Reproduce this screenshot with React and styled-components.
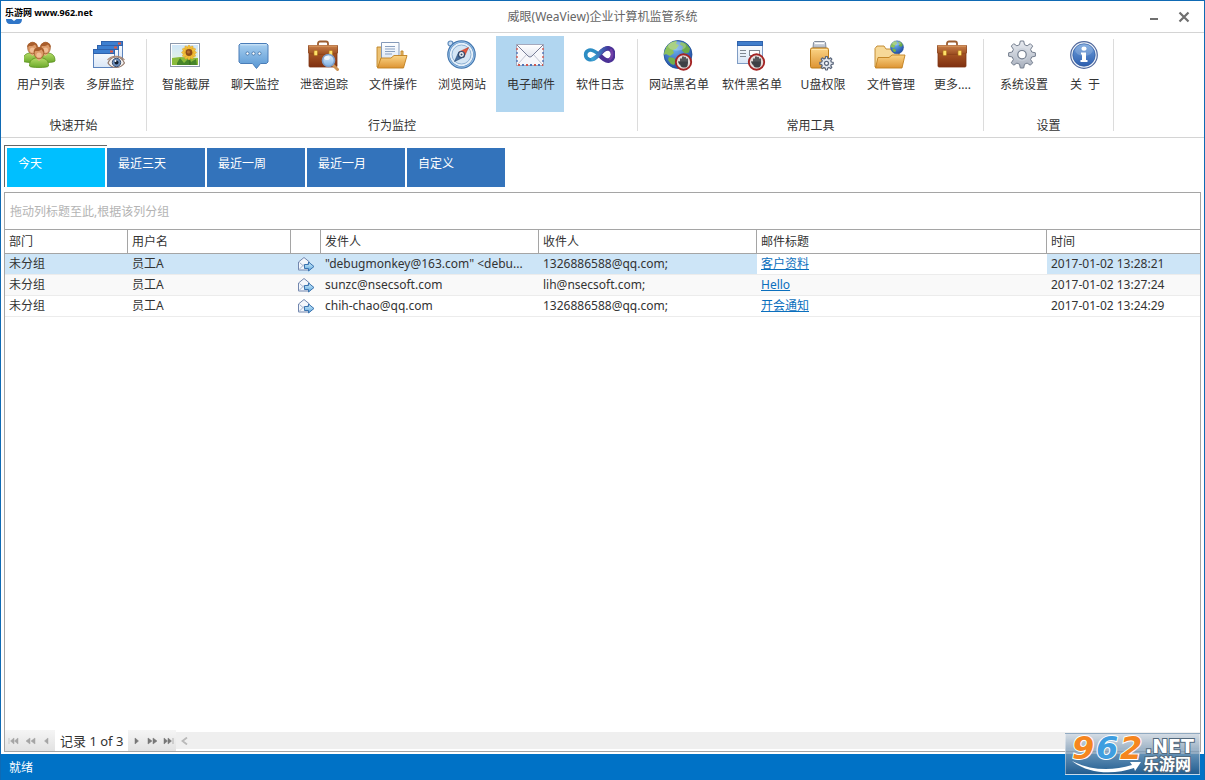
import React, { useState } from 'react';
import styled, { createGlobalStyle } from 'styled-components';

const toolGroups = [
  {
    title: '快速开始',
    tools: [
      { label: '用户列表', icon: 'users', width: 70 },
      { label: '多屏监控', icon: 'screens', width: 66 },
    ],
  },
  {
    title: '行为监控',
    tools: [
      { label: '智能截屏', icon: 'picture', width: 68 },
      { label: '聊天监控', icon: 'chat', width: 68 },
      { label: '泄密追踪', icon: 'trace', width: 68 },
      { label: '文件操作', icon: 'files', width: 68 },
      { label: '浏览网站', icon: 'compass', width: 68 },
      { label: '电子邮件', icon: 'mail', width: 68 },
      { label: '软件日志', icon: 'infinity', width: 68 },
    ],
  },
  {
    title: '常用工具',
    tools: [
      { label: '网站黑名单', icon: 'webBlock', width: 72 },
      { label: '软件黑名单', icon: 'appBlock', width: 72 },
      { label: 'U盘权限', icon: 'usb', width: 68 },
      { label: '文件管理', icon: 'fileManage', width: 66 },
      { label: '更多....', icon: 'briefcase', width: 55 },
    ],
  },
  {
    title: '设置',
    tools: [
      { label: '系统设置', icon: 'gear', width: 70 },
      { label: '关  于', icon: 'info', width: 50 },
    ],
  },
];

const tabs = ['今天', '最近三天', '最近一周', '最近一月', '自定义'];

const mails = [
  {
    dept: '未分组',
    user: '员工A',
    from: '"debugmonkey@163.com" <debu...',
    to: '1326886588@qq.com;',
    title: '客户资料',
    time: '2017-01-02 13:28:21',
  },
  {
    dept: '未分组',
    user: '员工A',
    from: 'sunzc@nsecsoft.com',
    to: 'lih@nsecsoft.com;',
    title: 'Hello',
    time: '2017-01-02 13:27:24',
  },
  {
    dept: '未分组',
    user: '员工A',
    from: 'chih-chao@qq.com',
    to: '1326886588@qq.com;',
    title: '开会通知',
    time: '2017-01-02 13:24:29',
  },
];

const Person = ({ x, y }) => (
  <g transform={`translate(${x} ${y})`}>
    <path
      d="M0 19c0-5 2-7 6-8h7c4 1 6 3 6 8 0 2-19 2-19 0z"
      fill="url(#shirt)"
      stroke="#5b8f1d"
      strokeWidth="0.8"
    />
    <path d="M6.500 11l3 3 3-3z" fill="#e9b184" />
    <ellipse cx="9.500" cy="6" rx="4.800" ry="5.800" fill="#dc9a68" stroke="#9a5526" strokeWidth="0.7" />
    <path d="M4.200 5.500C3.500-1 15.500-2 14.800 5.500 13 5 12.500 3 12 2.500 10 4.500 7 4 6 4z" fill="#a95e2c" />
    <ellipse cx="9.500" cy="8" rx="2.600" ry="2.600" fill="#f1bf96" />
  </g>
);

const MiniWindow = ({ x, y }) => (
  <g transform={`translate(${x} ${y})`}>
    <rect x="0.500" y="0.500" width="21" height="18" fill="url(#sheet)" stroke="#5b83bd" />
    <rect x="0.500" y="0.500" width="21" height="4" fill="#3d7fd0" stroke="#2f62ac" />
    <rect x="17" y="1.500" width="3" height="2" fill="#e2573d" />
  </g>
);

const Case = () => (
  <g>
    <path d="M11 7V4.500c0-1.500 1-2 2-2h6c1 0 2 .5 2 2V7" fill="none" stroke="#9b5d31" strokeWidth="1.800" />
    <rect x="2" y="9" width="28" height="19" rx="1" fill="url(#leather)" stroke="#7d3413" strokeWidth="0.8" />
    <path d="M1.500 6.500h29V14c-3 2-26 2-29 0z" fill="url(#flap)" stroke="#8d431b" strokeWidth="0.8" />
    <path d="M2 7h28" stroke="#dfa36c" />
    <rect x="7" y="11.500" width="3.500" height="5" rx="1" fill="#ffe069" stroke="#b2781a" strokeWidth="0.6" />
    <rect x="22" y="11.500" width="3.500" height="5" rx="1" fill="#ffe069" stroke="#b2781a" strokeWidth="0.6" />
  </g>
);

const Folder = () => (
  <g>
    <path d="M1 28V9.500L3 7h7l2 3h13v18z" fill="#f7d998" stroke="#bd8327" strokeWidth="0.9" />
    <path d="M4 18.500h11l3-2.500h13l-3 13H1.500z" fill="url(#folder)" stroke="#c0801f" strokeWidth="0.9" />
  </g>
);

const Globe = () => (
  <g>
    <circle cx="16" cy="15.500" r="14" fill="url(#ocean)" stroke="#1d4c94" strokeWidth="0.8" />
    <path d="M4 8.500C7 4 11 2 15 2l-1 3 3 1-3 4-3 1 1 3-4 3-4-2-2 1c0-2 .5-4.500 2-6.500z" fill="#8cc15c" />
    <path d="M19 3l5 1.500 4 5-1 4-4 1-3-3 1-4-3-2z" fill="#6cab48" />
    <path d="M7 18l5 1 2 3-2 4-3-1-3-4z" fill="#72b04a" />
    <ellipse cx="15" cy="7" rx="9" ry="4.500" fill="#fff" opacity="0.25" />
  </g>
);

const StopHand = () => (
  <g>
    <circle cx="21.500" cy="23" r="7.700" fill="#e4dddb" stroke="#a32424" strokeWidth="1.900" />
    <path
      d="M19 24v-4M21 23v-5M23 23v-4.500M25 24v-4M18.200 25l-1.200-2"
      stroke="#3d4045"
      strokeWidth="1.700"
      strokeLinecap="round"
    />
    <path d="M18.200 22.500h7.600V25c0 2-1 3.500-2.500 3.500h-2c-2 0-3.100-1.500-3.100-3.500z" fill="#3d4045" />
  </g>
);

const cog =
  'M13.300 1h3.400l.8 3.700 2.600 1.100 3.200-2.100 2.400 2.400-2.100 3.200 1.100 2.700 3.700.8v3.400l-3.700.8-1.100 2.600 2.100 3.200-2.400 2.400-3.200-2.100-2.600 1.100-.8 3.800h-3.400l-.8-3.800-2.600-1.100-3.200 2.100-2.400-2.400 2.100-3.200-1.100-2.600-3.700-.8v-3.400l3.700-.8 1.100-2.700-2.100-3.200 2.400-2.400 3.200 2.100 2.600-1.100z';

const Gear = () => (
  <g>
    <path d={cog} fill="url(#steel)" stroke="#747e8e" strokeWidth="1" strokeLinejoin="round" />
    <circle cx="15" cy="14.700" r="6.500" fill="#c9d0da" opacity="0.7" />
    <circle cx="15" cy="14.700" r="4.200" fill="#fff" stroke="#747e8e" strokeWidth="1.200" />
  </g>
);

const icons = {
  users: (
    <g>
      <Person x={-1} y={3} />
      <Person x={12} y={3} />
      <Person x={5.5} y={8} />
    </g>
  ),
  screens: (
    <g>
      <MiniWindow x={8} y={2} />
      <MiniWindow x={4} y={6} />
      <MiniWindow x={0} y={10} />
      <path d="M15 24c3-8 13-8 16.500 0-4 6-13 6-16.500 0z" fill="#f2f0ef" stroke="#93796c" strokeWidth="1.200" />
      <path d="M14.500 21c4-5 13-5 17 0" fill="none" stroke="#a98671" strokeWidth="1.200" />
      <circle cx="23.500" cy="23.500" r="4.200" fill="#6d8fbc" stroke="#3e5271" />
      <circle cx="23.500" cy="23.500" r="2" fill="#14202f" />
      <circle cx="22.500" cy="22" r="0.900" fill="#fff" />
    </g>
  ),
  picture: (
    <g>
      <rect x="1.500" y="4.500" width="29" height="23" fill="#fff" stroke="#8d99ac" />
      <rect x="3" y="6" width="26" height="20" fill="url(#sky)" />
      <path d="M3 19l8-1 18 1v7H3z" fill="#8abb3b" />
      <path d="M8 24l3-5 4 5 5-5 2 4 5-3 1 6H8z" fill="#47852a" />
      <path d="M20 17l1 9" stroke="#3b7323" strokeWidth="1.500" />
      {[0, 30, 60, 90, 120, 150].map(a => (
        <ellipse key={a} cx="20" cy="13.500" rx="7.500" ry="2.200" fill="#f2c13a" stroke="#d89420" strokeWidth="0.4" transform={`rotate(${a} 20 13.500)`} />
      ))}
      <circle cx="20" cy="13.500" r="3.400" fill="#8d4b19" />
      <circle cx="19.500" cy="13" r="1.600" fill="#b9702d" />
    </g>
  ),
  chat: (
    <g>
      <path d="M2.500 4.500h26l1.500 1.500v17l-1.500 1.500h-6l-4 5-4-5h-12L1 23V6z" fill="url(#bubble)" stroke="#4a7db8" />
      <path d="M2.500 5.800h26" stroke="#d3e8f8" />
      <circle cx="9.500" cy="14.500" r="1.600" fill="#fff" stroke="#3d6c9f" strokeWidth="0.8" />
      <circle cx="15.500" cy="14.500" r="1.600" fill="#fff" stroke="#3d6c9f" strokeWidth="0.8" />
      <circle cx="21.500" cy="14.500" r="1.600" fill="#fff" stroke="#3d6c9f" strokeWidth="0.8" />
    </g>
  ),
  trace: (
    <g>
      <Case />
      <path d="M26 26l4.500 4.500" stroke="#ce9354" strokeWidth="3" strokeLinecap="round" />
      <circle cx="21.500" cy="21.500" r="6" fill="url(#lens)" stroke="#7c9dc8" strokeWidth="1.600" />
      <ellipse cx="20" cy="19" rx="2.800" ry="2" fill="#fff" opacity="0.7" />
    </g>
  ),
  files: (
    <g>
      <path d="M1 28V8h5v20z" fill="#edc273" stroke="#bd8327" strokeWidth="0.9" />
      <path d="M25 12h2v8h-2z" fill="#edc273" stroke="#bd8327" strokeWidth="0.9" />
      <path d="M5.500 3.500h17.500V22H5.500z" fill="url(#sheet)" stroke="#8499b8" />
      <path d="M9 7.500h10M9 10h10M9 12.500h10M9 15h7" stroke="#8ba1c0" />
      <path d="M5 19h10l3-2.500h13l-3.500 12.500H1.500z" fill="url(#folder)" stroke="#c0801f" strokeWidth="0.9" />
    </g>
  ),
  compass: (
    <g>
      <circle cx="5.500" cy="4.500" r="2.500" fill="#c8dcf2" stroke="#5f8cbd" strokeWidth="1.200" />
      <circle cx="16.500" cy="15.500" r="13" fill="#e7f1fa" stroke="#3f74ad" strokeWidth="2.600" />
      <circle cx="16.500" cy="15.500" r="12.600" fill="none" stroke="#93bbe2" strokeWidth="1.200" />
      <circle cx="16.500" cy="15.500" r="9.500" fill="#d5e6f5" stroke="#8fb2d4" />
      <path d="M23.500 8.500l-4.300 9.200-5.200-4.800z" fill="#e2573d" stroke="#b8321f" strokeWidth="0.6" />
      <path d="M9.500 22.500l4.300-9.600 5.300 5z" fill="#496f9f" stroke="#24466f" strokeWidth="0.6" />
      <circle cx="16.500" cy="15.500" r="3" fill="#eef3f8" stroke="#30496c" strokeWidth="1.200" />
      <circle cx="16.500" cy="15.500" r="1" fill="#30496c" />
    </g>
  ),
  mail: (
    <g>
      <rect x="2.500" y="5.500" width="27" height="21" fill="#f7f7fb" stroke="#a5a9bd" />
      <path d="M4 25l9-10M28 25l-9-10" stroke="#c2c5d3" />
      <path d="M3 6l11 11c1.500 1.300 2.500 1.300 4 0L29 6z" fill="url(#flapMail)" />
      <path d="M3 6l11 11c1.500 1.300 2.500 1.300 4 0L29 6" fill="none" stroke="#777c96" />
      <path d="M4 26h25" stroke="#d1574d" strokeWidth="1.800" strokeDasharray="2 6" />
      <path d="M8 26h21" stroke="#4f76b7" strokeWidth="1.800" strokeDasharray="2 6" />
      <path d="M3 9v16M29 9v16" stroke="#d1574d" strokeWidth="1.400" strokeDasharray="2 6" />
      <path d="M3 13v12M29 13v12" stroke="#4f76b7" strokeWidth="1.400" strokeDasharray="2 6" />
    </g>
  ),
  infinity: (
    <g fill="none" strokeLinecap="round">
      <path d="M16 15.500C12 20 9 21.500 6 20.500c-4.500-1.500-4.500-8 0-9.300 3-.8 6 1 10 4.300" stroke="#2d8dc4" strokeWidth="3.600" />
      <path d="M16 15.500c4-5 7-6.800 10-6 5.500 1.500 5.500 10.500 0 12-3 .8-6-1.500-10-6" stroke="#4b3296" strokeWidth="4.600" />
      <path d="M10 20c4-1.500 6-5 9-8 2-2 4-3 6-3" stroke="url(#ribbon)" strokeWidth="4" />
      <path d="M28 11c2 3 1.500 7-1 9" stroke="#733fa8" strokeWidth="2.500" />
    </g>
  ),
  webBlock: (
    <g>
      <Globe />
      <StopHand />
    </g>
  ),
  appBlock: (
    <g>
      <rect x="2.500" y="2.500" width="25" height="22" fill="url(#sheet)" stroke="#7f9cc4" />
      <rect x="2.500" y="2.500" width="25" height="4" fill="#3f7dcc" stroke="#2f62ac" />
      <path d="M5 11.500h6M5 14.500h6M5 17.500h6" stroke="#7f8791" />
      <rect x="14.500" y="11.500" width="10" height="5" fill="#fff" stroke="#7f8791" />
      <StopHand />
    </g>
  ),
  usb: (
    <g>
      <path d="M7 9l.5-5.500 1-1h10l1 1L20 9z" fill="url(#steel)" stroke="#818b9b" />
      <path d="M9 4.500h9" stroke="#fff" />
      <rect x="4.500" y="9" width="18" height="20" rx="1.500" fill="url(#folder)" stroke="#bd7c19" />
      <path d="M6 10.500h15" stroke="#ffe5a8" />
      <g transform="translate(13 17) scale(0.500)">
        <path d={cog} fill="#e3e8ef" stroke="#59657a" strokeWidth="2.400" strokeLinejoin="round" />
        <circle cx="15" cy="14.700" r="4" fill="#fff" stroke="#59657a" strokeWidth="2.400" />
      </g>
    </g>
  ),
  fileManage: (
    <g>
      <Folder />
      <g transform="translate(15.500 1) scale(0.470)">
        <Globe />
      </g>
    </g>
  ),
  briefcase: <Case />,
  gear: (
    <g transform="translate(0 1)">
      <Gear />
    </g>
  ),
  info: (
    <g>
      <circle cx="16" cy="16" r="13.300" fill="#edf2f9" stroke="#52699c" strokeWidth="1.200" />
      <circle cx="16" cy="16" r="11.200" fill="url(#infoBlue)" stroke="#2f5aa2" strokeWidth="0.700" />
      <ellipse cx="16" cy="11" rx="9" ry="6" fill="#fff" opacity="0.18" />
      <ellipse cx="16" cy="9.700" rx="2.600" ry="2.100" fill="#fff" />
      <path d="M13 13.500h5v7.500h1.500v2h-7v-2H14v-5.500h-1z" fill="#fff" />
    </g>
  ),
};

const Gradient = ({ id, from, to }) => (
  <linearGradient id={id} x1="0" y1="0" x2="0" y2="1">
    <stop offset="0" stopColor={from} />
    <stop offset="1" stopColor={to} />
  </linearGradient>
);

const SharedDefs = () => (
  <HiddenSvg aria-hidden="true">
    <defs>
      <Gradient id="shirt" from="#b5dc67" to="#6ba92b" />
      <Gradient id="sheet" from="#ffffff" to="#d9e6f6" />
      <Gradient id="leather" from="#b6632c" to="#7f3010" />
      <Gradient id="flap" from="#c98049" to="#9a4c20" />
      <Gradient id="folder" from="#fbd587" to="#dd9433" />
      <Gradient id="sky" from="#cfe6f9" to="#eaf6dc" />
      <Gradient id="bubble" from="#a9d0f0" to="#5796d3" />
      <Gradient id="lens" from="#e2f1fd" to="#7db1e5" />
      <Gradient id="flapMail" from="#ffffff" to="#e2e4ee" />
      <Gradient id="steel" from="#e9ecf1" to="#a8b0be" />
      <Gradient id="infoBlue" from="#6fa0dc" to="#2d5eae" />
      <Gradient id="arrowBlue" from="#d6f0fd" to="#5ba5dc" />
      <linearGradient id="ribbon" x1="0" y1="0" x2="1" y2="0">
        <stop offset="0" stopColor="#3ba3d4" />
        <stop offset="1" stopColor="#433a9c" />
      </linearGradient>
      <radialGradient id="ocean" cx="0.4" cy="0.3" r="0.8">
        <stop offset="0" stopColor="#6fb2ee" />
        <stop offset="1" stopColor="#153f9c" />
      </radialGradient>
    </defs>
  </HiddenSvg>
);

const MailIcon = () => (
  <svg width="17" height="16" viewBox="0 0 17 16" role="img" aria-label="邮件">
    <path d="M0.500 6L6 1.500 11.500 6v8H0.500z" fill="#f3f6fb" stroke="#7186ae" />
    <path d="M1 13.500l5-5 5 5M1.500 6.500l4 3.500M11 6.500L7.500 10" fill="none" stroke="#a3b2cc" />
    <path d="M6.500 8.500h4V6l5.500 4.500-5.500 4.500v-2.500h-4z" fill="url(#arrowBlue)" stroke="#3a73af" />
  </svg>
);

const arrows = {
  first: 'M1 1v6M6 1L2.500 4 6 7zM10 1L6.500 4 10 7z',
  fastPrev: 'M5 1L1 4l4 3zM10 1L6 4l4 3z',
  prev: 'M7 1L3.500 4 7 7z',
  next: 'M4 1l3.500 3L4 7z',
  fastNext: 'M1 1l4 3-4 3zM6 1l4 3-4 3z',
  last: 'M1 1l3.500 3L1 7zM5 1l3.500 3L5 7zM10 1v6',
};

const PagerArrow = ({ name, label, disabled }) => (
  <PagerButton type="button" aria-label={label} disabled={disabled}>
    <svg width="11" height="8" viewBox="0 0 11 8">
      <path d={arrows[name]} fill="currentColor" stroke="currentColor" strokeWidth="0.500" />
    </svg>
  </PagerButton>
);

const App = () => {
  const [tool, setTool] = useState('mail');
  const [tab, setTab] = useState('今天');
  const [selected, setSelected] = useState(0);

  return (
    <Window>
      <GlobalStyle />
      <SharedDefs />
      <TitleBar>
        <SiteMark>
          <span>乐游网 www.962.net</span>
          <svg width="18" height="6" viewBox="0 0 18 6" aria-hidden="true">
            <path d="M1 0h5.500l2.500 2 2.500-2H17c0 3.500-1.500 5-4 5H5C2.500 5 1 3.500 1 0z" fill="#2f76c8" />
          </svg>
        </SiteMark>
        <Title>威眼(WeaView)企业计算机监管系统</Title>
        <WindowButtons>
          <WindowButton type="button" aria-label="最小化">
            <svg width="12" height="12" viewBox="0 0 12 12">
              <path d="M2 8h8" stroke="#6f6f6f" strokeWidth="2" />
            </svg>
          </WindowButton>
          <WindowButton type="button" aria-label="关闭">
            <svg width="12" height="12" viewBox="0 0 12 12">
              <path d="M1.500 1.500l9 9M10.500 1.500l-9 9" stroke="#6f6f6f" strokeWidth="2.200" />
            </svg>
          </WindowButton>
        </WindowButtons>
      </TitleBar>

      <Ribbon>
        {toolGroups.map(group => (
          <ToolGroup key={group.title}>
            <ToolRow>
              {group.tools.map(item => (
                <ToolButton
                  key={item.icon}
                  type="button"
                  $width={item.width}
                  $active={tool === item.icon}
                  onClick={() => setTool(item.icon)}
                >
                  <svg width="32" height="32" viewBox="0 0 32 32" aria-hidden="true">
                    {icons[item.icon]}
                  </svg>
                  <ToolLabel>{item.label}</ToolLabel>
                </ToolButton>
              ))}
            </ToolRow>
            <GroupTitle>{group.title}</GroupTitle>
          </ToolGroup>
        ))}
      </Ribbon>

      <Tabs>
        {tabs.map(name => (
          <Tab key={name} type="button" $active={tab === name} onClick={() => setTab(name)}>
            {name}
          </Tab>
        ))}
      </Tabs>

      <Grid>
        <GroupPanel>拖动列标题至此,根据该列分组</GroupPanel>
        <Table>
          <colgroup>
            <Col $width={123} />
            <Col $width={163} />
            <Col $width={30} />
            <Col $width={218} />
            <Col $width={218} />
            <col />
            <Col $width={153} />
          </colgroup>
          <thead>
            <tr>
              <Th>部门</Th>
              <Th>用户名</Th>
              <Th aria-label="类型" />
              <Th>发件人</Th>
              <Th>收件人</Th>
              <Th>邮件标题</Th>
              <Th>时间</Th>
            </tr>
          </thead>
          <tbody>
            {mails.map((mail, i) => (
              <Row key={mail.time} $selected={selected === i} onClick={() => setSelected(i)}>
                <Td>{mail.dept}</Td>
                <Td>{mail.user}</Td>
                <IconTd>
                  <MailIcon />
                </IconTd>
                <Td>{mail.from}</Td>
                <Td>{mail.to}</Td>
                <TitleTd $selected={selected === i}>
                  <a href="#mail">{mail.title}</a>
                </TitleTd>
                <Td>{mail.time}</Td>
              </Row>
            ))}
          </tbody>
        </Table>
        <Pager>
          <PagerButtons $width={50}>
            <PagerArrow name="first" label="第一条" disabled />
            <PagerArrow name="fastPrev" label="上一页" disabled />
            <PagerArrow name="prev" label="上一条" disabled />
          </PagerButtons>
          <Record>记录 1 of 3</Record>
          <PagerButtons $width={48}>
            <PagerArrow name="next" label="下一条" />
            <PagerArrow name="fastNext" label="下一页" />
            <PagerArrow name="last" label="最后一条" />
          </PagerButtons>
          <ScrollTrack>
            <ScrollButton type="button" aria-label="向左滚动">
              <svg width="7" height="8" viewBox="0 0 7 8">
                <path d="M6 0.500L1.500 4 6 7.500" fill="none" stroke="#b9b9b9" strokeWidth="1.800" />
              </svg>
            </ScrollButton>
          </ScrollTrack>
        </Pager>
      </Grid>

      <StatusBar>就绪</StatusBar>

      <Watermark>
        <svg width="133" height="40" viewBox="0 0 133 40">
          <g fontFamily="'DejaVu Sans', sans-serif" fontWeight="bold" fontStyle="oblique" fontSize="32" stroke="#fff" strokeWidth="2" paintOrder="stroke">
            <text x="6" y="25" fill="#f5861f">9</text>
            <text x="30" y="25" fill="#3f9ee0">6</text>
            <text x="54" y="25" fill="#f5861f">2</text>
          </g>
          <path d="M6 27c20 10 40 10 60 4l-2-3 11 0-6 9-1-3C48 41 22 40 6 27z" fill="#fff" />
          <g
            fill="#fff"
            stroke="#53697d"
            strokeWidth="2"
            paintOrder="stroke"
            fontWeight="bold"
            fontFamily="'DejaVu Sans', 'Noto Sans CJK SC', sans-serif"
          >
            <text x="79" y="19" fontSize="19">.NET</text>
            <text x="77" y="36" fontSize="16">乐游网</text>
          </g>
        </svg>
      </Watermark>
    </Window>
  );
};

export default App;

const GlobalStyle = createGlobalStyle`
  * {
    box-sizing: border-box;
  }

  body {
    margin: 0;
    font-family: 'Noto Sans', 'Noto Sans CJK SC', sans-serif;
    font-size: 12px;
    line-height: 16px;
    color: #333;
    background: #fff;
  }

  button {
    padding: 0;
    border: 0;
    font: inherit;
    color: inherit;
    background: none;
  }
`;

const HiddenSvg = styled.svg`
  position: absolute;
  width: 0;
  height: 0;
`;

const Window = styled.div`
  position: relative;
  display: flex;
  flex-direction: column;
  min-height: 100vh;
  border: 1px solid #0f6ab4;
  border-bottom: 0;
`;

const TitleBar = styled.header`
  display: grid;
  grid-template-columns: 1fr auto 1fr;
  align-items: center;
  height: 32px;
  border-bottom: 1px solid #d4d4d4;
`;

const SiteMark = styled.div`
  display: flex;
  flex-direction: column;
  align-self: start;
  padding: 6px 0 0 4px;
  font-size: 9px;
  font-weight: 700;
  line-height: 12px;
  color: #000;
`;

const Title = styled.h1`
  margin: 0;
  font-size: 12px;
  font-weight: 400;
  color: #666;
`;

const WindowButtons = styled.div`
  display: flex;
  justify-content: flex-end;
  gap: 6px;
  padding-right: 8px;
`;

const WindowButton = styled.button`
  display: flex;
  align-items: center;
  justify-content: center;
  width: 24px;
  height: 24px;
`;

const Ribbon = styled.nav`
  display: flex;
  height: 105px;
  border-bottom: 1px solid #d4d4d4;
  padding: 3px 0 5px;
`;

const ToolGroup = styled.section`
  position: relative;
  display: flex;
  flex-direction: column;
  padding: 0 5px 0 4px;

  &::after {
    content: '';
    position: absolute;
    top: 3px;
    right: 0;
    bottom: 1px;
    border-right: 1px solid #dcdcdc;
  }
`;

const ToolRow = styled.div`
  display: flex;
  gap: 1px;
`;

const ToolButton = styled.button`
  display: flex;
  flex-direction: column;
  align-items: center;
  gap: 6px;
  width: ${({ $width }) => $width}px;
  height: 76px;
  padding-top: 3px;
  background: ${({ $active }) => ($active ? '#b1d6f0' : 'transparent')};
`;

const ToolLabel = styled.span`
  padding-left: 2px;
  white-space: pre;
`;

const GroupTitle = styled.div`
  padding-top: 6px;
  text-align: center;
`;

const Tabs = styled.div`
  display: flex;
  gap: 2px;
  padding: 7px 6px 5px;
`;

const Tab = styled.button`
  width: 98px;
  height: 39px;
  margin-top: 3px;
  padding: 0 11px 7px;
  text-align: left;
  color: #fff;
  background: #3373bb;

  ${({ $active }) =>
    $active &&
    `
    width: 103px;
    height: 42px;
    margin: 0 -2px 0 -3px;
    padding: 2px 13px 7px;
    border: solid #666;
    border-width: 1px 0 0 1px;
    background: #00bfff;
    box-shadow: inset 2px 2px #fff, inset -2px 0 #fff;
  `}
`;

const Grid = styled.main`
  flex: 1;
  display: flex;
  flex-direction: column;
  margin: 0 3px 2px;
  border: 1px solid #a5a5a5;
`;

const GroupPanel = styled.div`
  padding: 11px 5px 9px;
  color: #b4b4b4;
`;

const Table = styled.table`
  width: 100%;
  table-layout: fixed;
  border-spacing: 0;
`;

const Col = styled.col`
  width: ${({ $width }) => $width}px;
`;

const Th = styled.th`
  height: 25px;
  padding: 0 4px;
  border: solid #a5a5a5;
  border-width: 1px 1px 1px 0;
  font-weight: 400;
  text-align: left;

  &:last-child {
    border-right: 0;
  }
`;

const Td = styled.td`
  height: 21px;
  padding: 0 4px;
  border-bottom: 1px solid #ececec;
  overflow: hidden;
  white-space: nowrap;
`;

const IconTd = styled(Td)`
  padding: 0 0 0 7px;

  svg {
    display: block;
  }
`;

const TitleTd = styled(Td)`
  background: ${({ $selected }) => ($selected ? '#fff' : 'transparent')};

  a {
    color: #0b6fbd;
  }
`;

const Row = styled.tr`
  background: ${({ $selected }) => ($selected ? '#cde5f7' : '#fff')};

  &:nth-child(2) {
    background: ${({ $selected }) => ($selected ? '#cde5f7' : '#f9f9f9')};
  }
`;

const Pager = styled.footer`
  display: flex;
  align-items: center;
  height: 21px;
  margin-top: auto;
`;

const PagerButtons = styled.div`
  display: flex;
  width: ${({ $width }) => $width}px;
  height: 21px;
  background: linear-gradient(#f5f5f5, #e2e2e2);
`;

const PagerButton = styled.button`
  flex: 1;
  display: flex;
  align-items: center;
  justify-content: center;
  color: #777;

  &:disabled {
    color: #a5a5a5;
  }
`;

const Record = styled.span`
  padding: 0 5px;
  font-size: 13px;
`;

const ScrollTrack = styled.div`
  flex: 1;
  display: flex;
  height: 17px;
  background: #efefef;
`;

const ScrollButton = styled.button`
  display: flex;
  align-items: center;
  justify-content: center;
  width: 17px;
`;

const StatusBar = styled.div`
  padding: 6px 8px 4px;
  color: #fff;
  background: #0072c6;
`;

const Watermark = styled.div`
  position: absolute;
  right: 4px;
  bottom: 5px;
  border: 1px solid rgba(255, 255, 255, 0.4);
  background: linear-gradient(rgba(205, 215, 225, 0.8), rgba(40, 90, 135, 0.85));

  svg {
    display: block;
  }
`;
